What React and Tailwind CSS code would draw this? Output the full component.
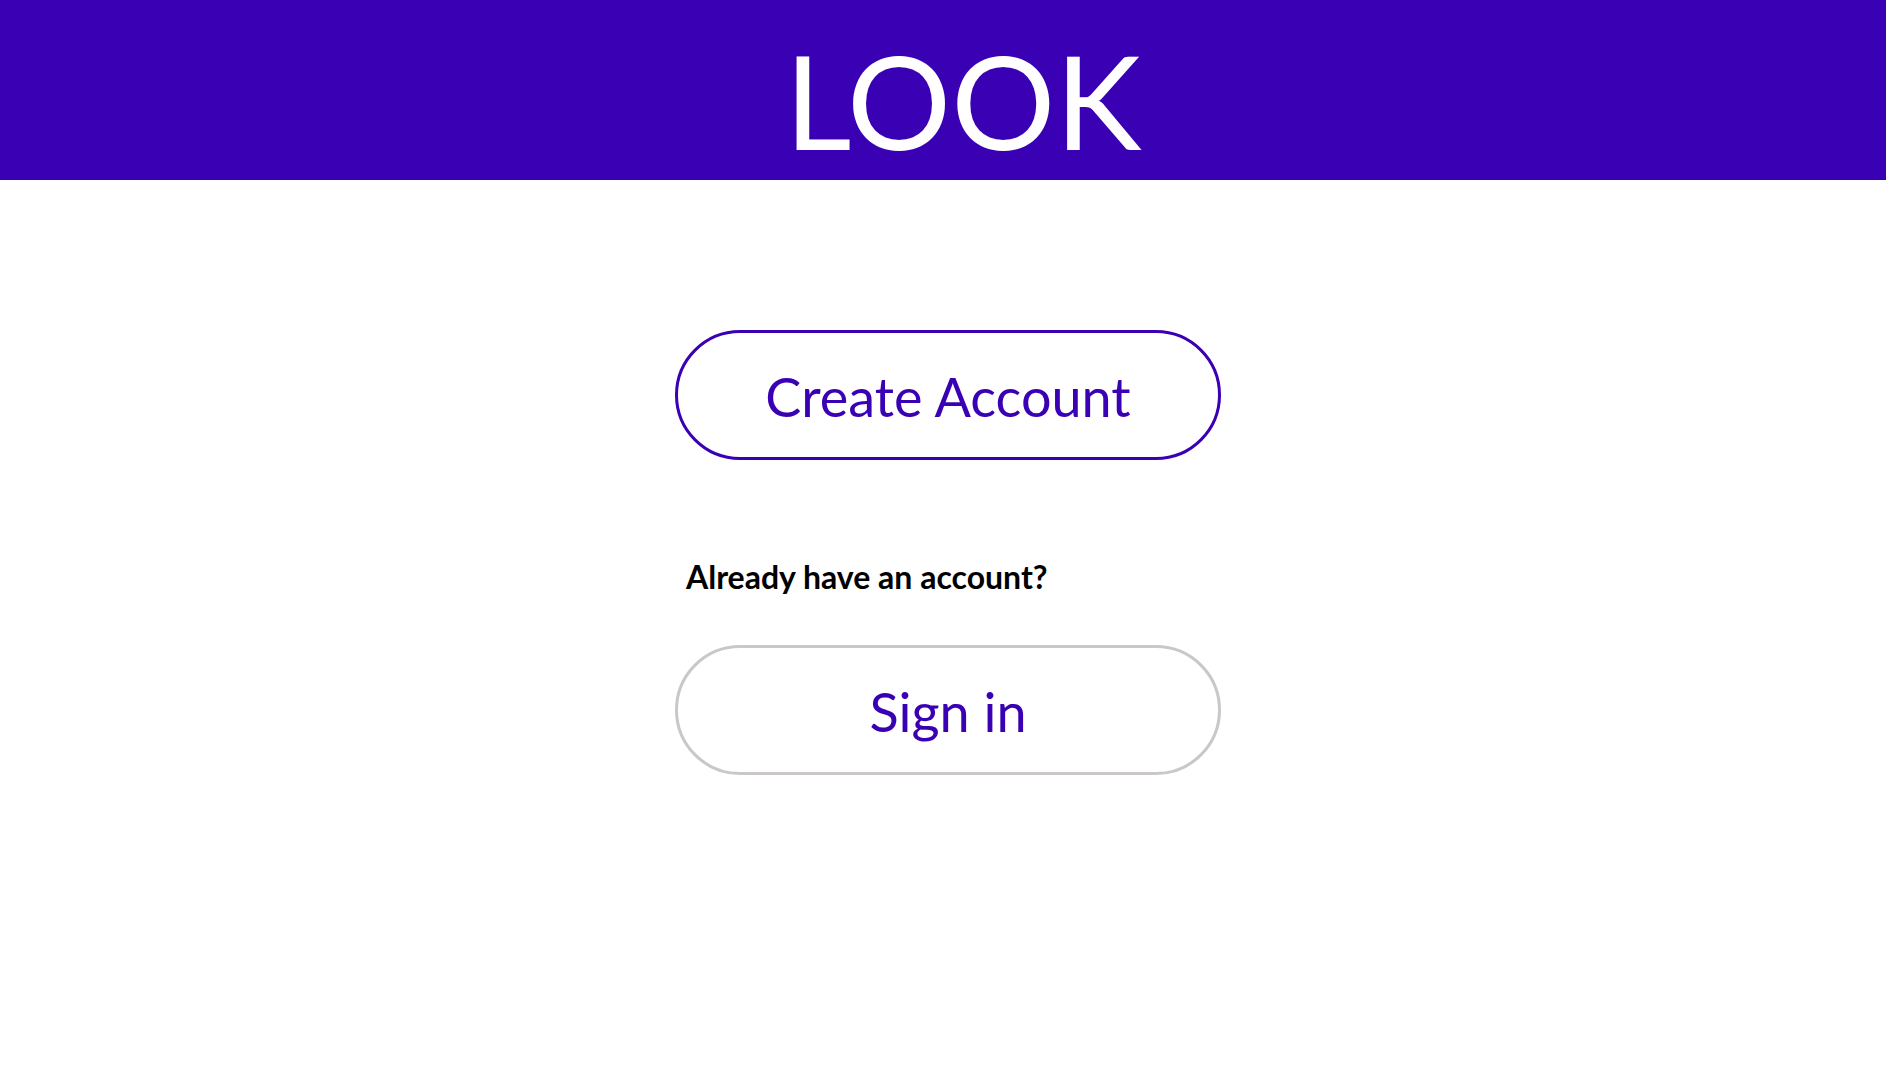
export default function App() {
    return (
        <div className="min-h-screen bg-white" style={{ fontFamily: "Lato, 'Liberation Sans', sans-serif" }}>
            <header className="h-[180px] bg-[#3a00b3] flex items-center justify-center">
                <h1 className="text-white text-[130px] leading-none font-normal pl-[40px] pt-[19px]">LOOK</h1>
            </header>

            <main className="flex flex-col items-center pt-[150px] pl-[10px]">
                <button className="w-[546px] h-[130px] rounded-full border-[3px] border-[#3a00b3] text-[#3a00b3] text-[54px] leading-none pt-[4px]">
                    Create Account
                </button>

                <div className="w-[546px] mt-[98px] pl-[11px]">
                    <p className="text-black text-[32px] leading-[38px] font-bold">Already have an account?</p>
                </div>

                <button className="w-[546px] h-[130px] mt-[49px] rounded-full border-[3px] border-[#cbc7c7] text-[#3a00b3] text-[54px] leading-none pt-[4px]">
                    Sign in
                </button>
            </main>
        </div>
    );
}
